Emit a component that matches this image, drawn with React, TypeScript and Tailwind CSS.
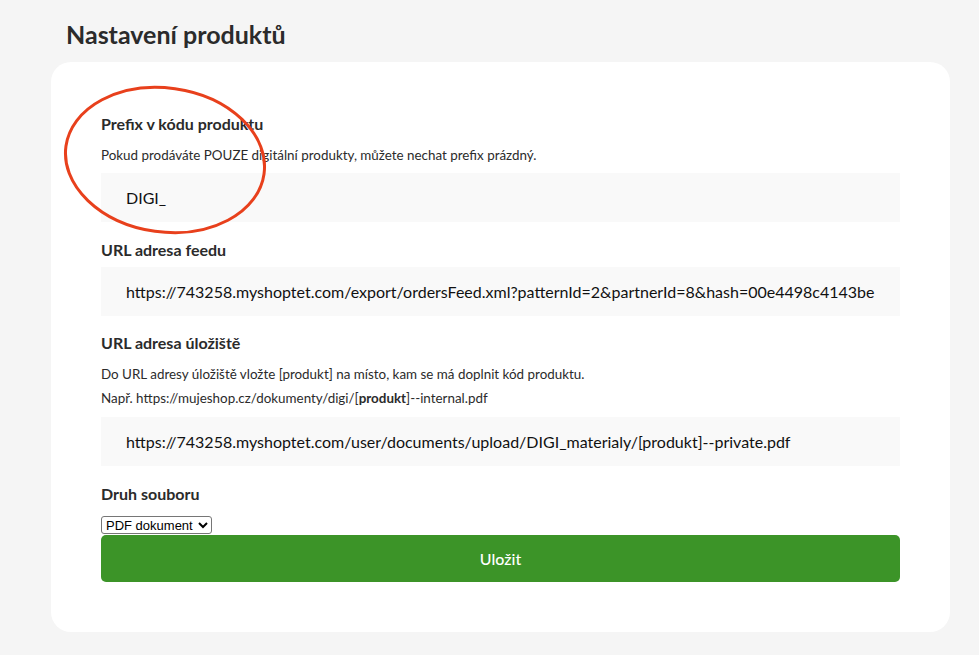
import React from 'react';

const font = { fontFamily: 'Lato, "Open Sans", sans-serif' };

const Label: React.FC<{ children: React.ReactNode; className?: string }> = ({ children, className = '' }) => (
  <div className={`text-[16px] leading-[24px] font-bold text-[#2b2b2b] ${className}`}>{children}</div>
);

const Field: React.FC<{ value: string; className?: string }> = ({ value, className = '' }) => (
  <div className={`h-[49px] bg-[#f9f9f9] flex items-center px-[25px] text-[16px] text-[#111] whitespace-nowrap overflow-hidden ${className}`}>
    {value}
  </div>
);

export default function App() {
  return (
    <div className="min-h-[655px] bg-[#f5f5f5] px-[51px] pt-[19px] pb-[23px] relative" style={font}>
      <h1 className="ml-[15px] text-[25px] leading-[30px] font-bold text-[#2b2b2b]">Nastavení produktů</h1>
      <div className="mt-[13px] w-[899px] bg-white rounded-[20px] px-[50px] pt-[50px] pb-[50px]">
        <Label>Prefix v kódu produktu</Label>
        <p className="mt-[10px] text-[13.4px] leading-[18px] text-[#2b2b2b]">
          Pokud prodáváte POUZE digitální produkty, můžete nechat prefix prázdný.
        </p>
        <Field value="DIGI_" className="mt-[9px]" />

        <Label className="mt-[16px]">URL adresa feedu</Label>
        <Field
          value="https://743258.myshoptet.com/export/ordersFeed.xml?patternId=2&partnerId=8&hash=00e4498c4143be"
          className="mt-[5px]"
        />

        <Label className="mt-[15px]">URL adresa úložiště</Label>
        <div className="mt-[7px] text-[13.4px] leading-[24px] text-[#2b2b2b]">
          <p>Do URL adresy úložiště vložte [produkt] na místo, kam se má doplnit kód produktu.</p>
          <p>
            Např. https://mujeshop.cz/dokumenty/digi/[<b className="font-bold">produkt</b>]--internal.pdf
          </p>
        </div>
        <Field
          value="https://743258.myshoptet.com/user/documents/upload/DIGI_materialy/[produkt]--private.pdf"
          className="mt-[7px] text-[16.2px]"
        />

        <Label className="mt-[16px]">Druh souboru</Label>
        <div className="mt-[10px] flex">
          <select
            defaultValue="pdf"
            className="h-[18px] w-[111px] text-[13px] leading-[16px] text-black border border-[#767676] rounded-[3px] bg-white"
            style={{ fontFamily: '"Liberation Sans", Arial, sans-serif' }}
          >
            <option value="pdf">PDF dokument</option>
          </select>
        </div>
        <button className="mt-[1px] w-full h-[47px] rounded-[5px] bg-[#3c9428] text-white text-[16px] font-medium">
          Uložit
        </button>
      </div>

      <svg className="absolute left-[60px] top-[82px] pointer-events-none" width="212" height="158" viewBox="0 0 212 158">
        <ellipse cx="105" cy="78" rx="100" ry="72" fill="none" stroke="#e8401c" strokeWidth="3" transform="rotate(8 105 78)" />
      </svg>
    </div>
  );
}
